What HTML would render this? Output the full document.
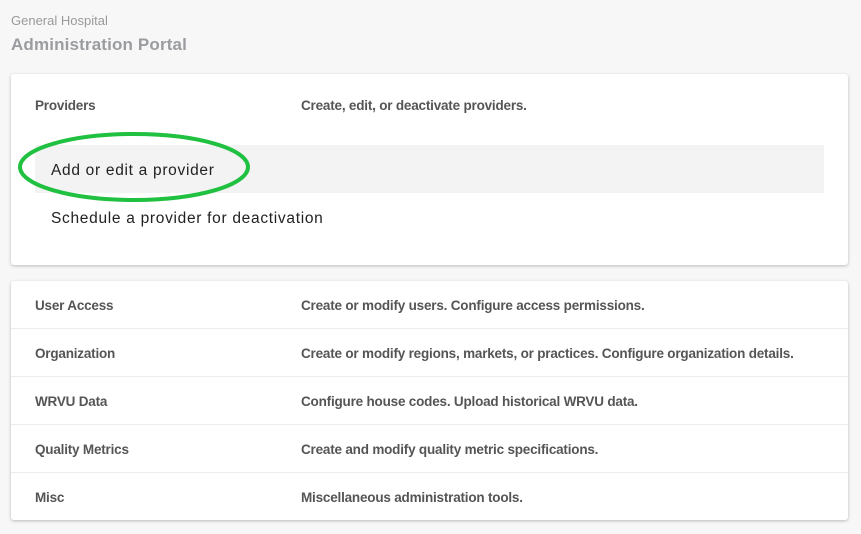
<!DOCTYPE html>
<html><head><meta charset="utf-8"><style>
*{margin:0;padding:0;box-sizing:border-box}
body{width:861px;height:534px;background:#f7f7f8;font-family:"Liberation Sans",sans-serif;position:relative;overflow:hidden}
.h1{position:absolute;left:11px;top:13px;font-size:13px;color:#9a9a9a}
.h2{position:absolute;left:11px;top:35px;font-size:17px;font-weight:bold;color:#9a9ca0;letter-spacing:0.15px}
.card{position:absolute;left:11px;width:837px;background:#fff;border-radius:3px;box-shadow:0 1px 3px rgba(0,0,0,.25)}
.lbl{position:absolute;left:24px;font-size:13.5px;color:#555;font-weight:bold;letter-spacing:-0.2px}
.desc{position:absolute;left:290px;font-size:13.5px;color:#555;font-weight:bold;letter-spacing:-0.2px}
.row{position:absolute;left:0;width:837px;height:48px;border-top:1px solid #ececec}
.row .lbl,.row .desc{top:17px}
.sub{position:absolute;left:40px;font-size:15.5px;color:#222;letter-spacing:0.7px}
</style></head><body>
<div class="h1">General Hospital</div>
<div class="h2">Administration Portal</div>
<div class="card" style="top:74px;height:191px">
<div class="lbl" style="top:24px">Providers</div>
<div class="desc" style="top:24px">Create, edit, or deactivate providers.</div>
<div style="position:absolute;left:24px;top:71px;width:789px;height:48px;background:#f3f3f3"></div>
<div class="sub" style="top:88px">Add or edit a provider</div>
<div class="sub" style="top:136px">Schedule a provider for deactivation</div>
</div>
<div class="card" style="top:281px;height:239px">
<div class="row" style="top:0;border-top:none"><div class="lbl">User Access</div><div class="desc">Create or modify users. Configure access permissions.</div></div>
<div class="row" style="top:47px"><div class="lbl">Organization</div><div class="desc">Create or modify regions, markets, or practices. Configure organization details.</div></div>
<div class="row" style="top:95px"><div class="lbl">WRVU Data</div><div class="desc">Configure house codes. Upload historical WRVU data.</div></div>
<div class="row" style="top:143px"><div class="lbl">Quality Metrics</div><div class="desc">Create and modify quality metric specifications.</div></div>
<div class="row" style="top:191px"><div class="lbl">Misc</div><div class="desc">Miscellaneous administration tools.</div></div>
</div>
<svg style="position:absolute;left:0;top:0" width="861" height="534"><ellipse cx="134" cy="167" rx="114" ry="33" fill="none" stroke="#20c040" stroke-width="4"/></svg>
</body></html>
